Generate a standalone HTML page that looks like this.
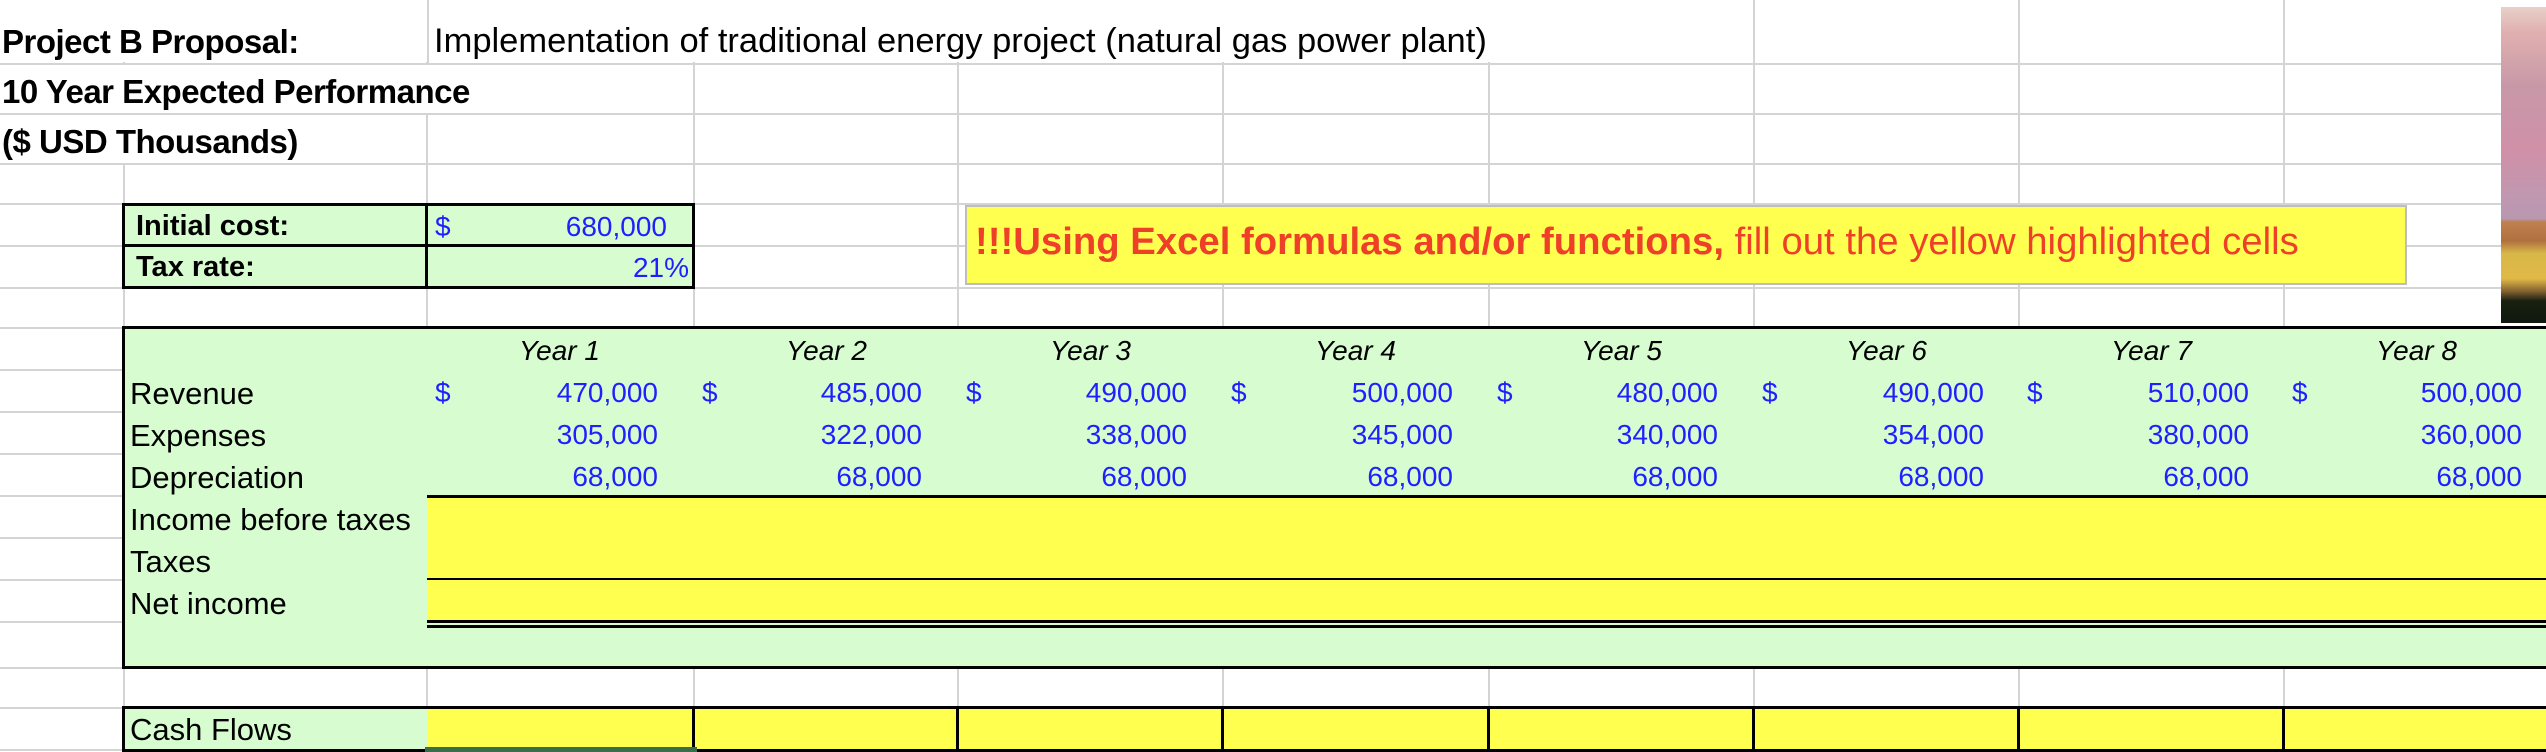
<!DOCTYPE html>
<html><head><meta charset="utf-8"><style>
body{margin:0;width:2546px;height:752px;overflow:hidden;background:#fff;position:relative;font-family:"Liberation Sans",sans-serif}
div{position:absolute;box-sizing:border-box}
.h{height:2px;background:#d4d4d4;left:0;width:2546px}
.v{width:2px;background:#d4d4d4}
.t{font-size:31px;line-height:31px;white-space:nowrap}
.n{font-size:28px;line-height:28px;white-space:nowrap}
.b{color:#1f1fff}
.r{text-align:right}
.y{font-style:italic;text-align:center;width:265px}
.ti{font-size:33px;line-height:33px;font-weight:bold;white-space:nowrap;background:#fff;letter-spacing:-0.5px}
</style></head><body>
<div class="h" style="top:63px"></div><div class="h" style="top:113px"></div><div class="h" style="top:163px"></div>
<div class="h" style="top:203px"></div><div class="h" style="top:245px"></div><div class="h" style="top:287px"></div>
<div class="h" style="top:327px"></div><div class="h" style="top:369px"></div><div class="h" style="top:411px"></div>
<div class="h" style="top:453px"></div><div class="h" style="top:495px"></div><div class="h" style="top:537px"></div>
<div class="h" style="top:579px"></div><div class="h" style="top:621px"></div><div class="h" style="top:667px"></div>
<div class="h" style="top:707px"></div><div class="h" style="top:749px"></div>
<div class="v" style="left:123px;top:0;height:752px"></div>
<div class="v" style="left:426px;top:0;height:752px"></div>
<div class="v" style="left:693px;top:0;height:752px"></div>
<div class="v" style="left:957px;top:0;height:752px"></div>
<div class="v" style="left:1222px;top:0;height:752px"></div>
<div class="v" style="left:1488px;top:0;height:752px"></div>
<div class="v" style="left:1753px;top:0;height:752px"></div>
<div class="v" style="left:2018px;top:0;height:752px"></div>
<div class="v" style="left:2283px;top:0;height:752px"></div>

<div style="left:0;top:0;width:1496px;height:62px;background:#fff"></div>
<div style="left:0;top:65px;width:470px;height:48px;background:#fff"></div>
<div style="left:0;top:115px;width:300px;height:48px;background:#fff"></div>
<div style="left:427px;top:0;width:2px;height:63px;background:#d4d4d4"></div>
<div class="ti" style="left:2px;top:25px">Project B Proposal:</div>
<div class="ti" style="left:2px;top:75px">10 Year Expected Performance</div>
<div class="ti" style="left:2px;top:125px">($ USD Thousands)</div>
<div style="left:434px;top:24px;font-size:34.5px;line-height:34px;white-space:nowrap;background:#fff">Implementation of traditional energy project (natural gas power plant)</div>

<div style="left:122px;top:203px;width:573px;height:86px;background:#d6fcd0;border:3px solid #000"></div>
<div style="left:425px;top:203px;width:3px;height:86px;background:#000"></div>
<div style="left:122px;top:244px;width:573px;height:3px;background:#000"></div>
<div class="t" style="left:136px;top:211px;font-size:29px;font-weight:bold">Initial cost:</div>
<div class="t" style="left:136px;top:252px;font-size:29px;font-weight:bold">Tax rate:</div>
<div class="n b" style="left:435px;top:213px">$</div>
<div class="n b r" style="left:427px;width:240px;top:213px">680,000</div>
<div class="n b r" style="left:427px;width:262px;top:254px">21%</div>

<div style="left:965px;top:205px;width:1442px;height:80px;background:#ffff50;border:2px solid #bdbdbd"></div>
<div style="left:975px;top:223px;font-size:38.3px;line-height:38px;color:#ee4028;white-space:nowrap"><b>!!!Using Excel formulas and/or functions,</b> fill out the yellow highlighted cells</div>

<div style="left:2501px;top:7px;width:45px;height:316px;background:linear-gradient(#e8d0c8 0%,#e0b0b0 8%,#c898a8 25%,#d090a8 45%,#c098b0 60%,#b898b0 67%,#c08050 68%,#b07040 74%,#d8b848 78%,#e0b848 86%,#806030 90%,#182010 93%,#101810 100%)"></div>

<div style="left:122px;top:326px;width:2430px;height:343px;background:#d6fcd0;border:3px solid #000"></div>
<div style="left:427px;top:495px;width:2119px;height:86px;background:#ffff50;border-top:3px solid #000;border-bottom:3px solid #000"></div>
<div style="left:427px;top:580px;width:2119px;height:41px;background:#ffff50"></div>
<div style="left:427px;top:620px;width:2119px;height:3px;background:#000"></div>
<div style="left:427px;top:625px;width:2119px;height:3px;background:#000"></div>

<div class="t" style="left:130px;top:378px">Revenue</div>
<div class="t" style="left:130px;top:420px">Expenses</div>
<div class="t" style="left:130px;top:462px">Depreciation</div>
<div class="t" style="left:130px;top:504px">Income before taxes</div>
<div class="t" style="left:130px;top:546px">Taxes</div>
<div class="t" style="left:130px;top:588px">Net income</div>

<div class="n y" style="left:427px;top:337px">Year 1</div>
<div class="n y" style="left:694px;top:337px">Year 2</div>
<div class="n y" style="left:958px;top:337px">Year 3</div>
<div class="n y" style="left:1223px;top:337px">Year 4</div>
<div class="n y" style="left:1489px;top:337px">Year 5</div>
<div class="n y" style="left:1754px;top:337px">Year 6</div>
<div class="n y" style="left:2019px;top:337px">Year 7</div>
<div class="n y" style="left:2284px;top:337px">Year 8</div>

<div class="n b" style="left:435px;top:379px">$</div>
<div class="n b" style="left:702px;top:379px">$</div>
<div class="n b" style="left:966px;top:379px">$</div>
<div class="n b" style="left:1231px;top:379px">$</div>
<div class="n b" style="left:1497px;top:379px">$</div>
<div class="n b" style="left:1762px;top:379px">$</div>
<div class="n b" style="left:2027px;top:379px">$</div>
<div class="n b" style="left:2292px;top:379px">$</div>

<div class="n b r" style="left:427px;width:231px;top:379px">470,000</div>
<div class="n b r" style="left:694px;width:228px;top:379px">485,000</div>
<div class="n b r" style="left:958px;width:229px;top:379px">490,000</div>
<div class="n b r" style="left:1223px;width:230px;top:379px">500,000</div>
<div class="n b r" style="left:1489px;width:229px;top:379px">480,000</div>
<div class="n b r" style="left:1754px;width:230px;top:379px">490,000</div>
<div class="n b r" style="left:2019px;width:230px;top:379px">510,000</div>
<div class="n b r" style="left:2284px;width:238px;top:379px">500,000</div>

<div class="n b r" style="left:427px;width:231px;top:421px">305,000</div>
<div class="n b r" style="left:694px;width:228px;top:421px">322,000</div>
<div class="n b r" style="left:958px;width:229px;top:421px">338,000</div>
<div class="n b r" style="left:1223px;width:230px;top:421px">345,000</div>
<div class="n b r" style="left:1489px;width:229px;top:421px">340,000</div>
<div class="n b r" style="left:1754px;width:230px;top:421px">354,000</div>
<div class="n b r" style="left:2019px;width:230px;top:421px">380,000</div>
<div class="n b r" style="left:2284px;width:238px;top:421px">360,000</div>

<div class="n b r" style="left:427px;width:231px;top:463px">68,000</div>
<div class="n b r" style="left:694px;width:228px;top:463px">68,000</div>
<div class="n b r" style="left:958px;width:229px;top:463px">68,000</div>
<div class="n b r" style="left:1223px;width:230px;top:463px">68,000</div>
<div class="n b r" style="left:1489px;width:229px;top:463px">68,000</div>
<div class="n b r" style="left:1754px;width:230px;top:463px">68,000</div>
<div class="n b r" style="left:2019px;width:230px;top:463px">68,000</div>
<div class="n b r" style="left:2284px;width:238px;top:463px">68,000</div>

<div style="left:122px;top:706px;width:2430px;height:46px;background:#ffff50;border-top:3px solid #000;border-bottom:3px solid #000"></div>
<div style="left:122px;top:706px;width:306px;height:46px;background:#d6fcd0;border:3px solid #000;border-right:none"></div>
<div style="left:692px;top:708px;width:3px;height:42px;background:#000"></div>
<div style="left:956px;top:708px;width:3px;height:42px;background:#000"></div>
<div style="left:1221px;top:708px;width:3px;height:42px;background:#000"></div>
<div style="left:1487px;top:708px;width:3px;height:42px;background:#000"></div>
<div style="left:1752px;top:708px;width:3px;height:42px;background:#000"></div>
<div style="left:2017px;top:708px;width:3px;height:42px;background:#000"></div>
<div style="left:2282px;top:708px;width:3px;height:42px;background:#000"></div>
<div style="left:425px;top:747px;width:272px;height:5px;background:#3a6e48"></div>
<div class="t" style="left:130px;top:714px">Cash Flows</div>
</body></html>
